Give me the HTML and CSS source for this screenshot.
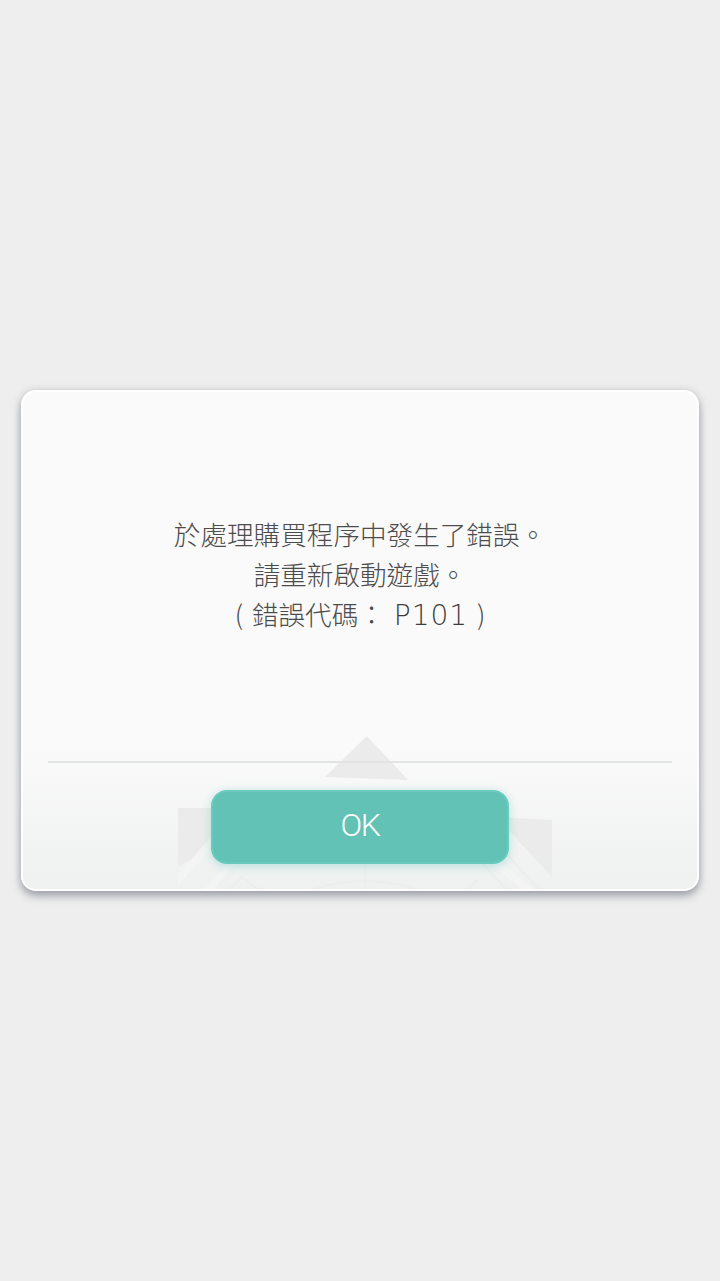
FILE: index.html
```html
<!DOCTYPE html>
<html lang="zh-Hant">
<head>
    <meta charset="UTF-8">
    <meta name="viewport" content="width=device-width, initial-scale=1.0">
    <title>錯誤</title>
    <link rel="stylesheet" href="styles.css">
</head>
<body>
    <div class="dialog">
        <svg class="watermark" width="400" height="170" viewBox="0 0 400 170">
            <polygon class="mark" points="189,17 147,58 230,61"/>
            <polygon class="mark" points="0,89 60,89 60,110 0,148"/>
            <polygon class="mark" points="320,98 374,101 374,158 320,100"/>
            <path class="stripe" d="M-4 166 L34 122 M30 172 L62 134 M300 130 L352 172"/>
            <path class="stripe-thin" d="M52 170 L64 158 L82 172 M187 130 V170 M130 172 Q187 152 244 172 M288 172 L300 160 M330 172 L300 140 M362 172 L326 132"/>
        </svg>
        <div class="message">
            <p>於處理購買程序中發生了錯誤。</p>
            <p>請重新啟動遊戲。</p>
            <p class="error-code">( 錯誤代碼： <span class="code">P101</span> )</p>
        </div>
        <div class="divider"></div>
        <div class="actions">
            <button class="ok-btn">OK</button>
        </div>
    </div>
</body>
</html>
```

FILE: styles.css
```css
body {
    margin: 0;
    height: 1281px;
    display: flex;
    align-items: center;
    justify-content: center;
    background-color: #eeeeee;
    font-family: "Noto Sans CJK TC", "Noto Sans", sans-serif;
    overflow: hidden;
}
.dialog {
    position: relative;
    box-sizing: border-box;
    width: 678px;
    height: 501px;
    display: flex;
    flex-direction: column;
    border: 2px solid #ffffff;
    border-radius: 15px;
    background: linear-gradient(#fafafa 0%, #fafafa 72%, #eff0f0 100%);
    box-shadow: 0 5px 9px rgba(110, 116, 128, 0.6), 0 0 7px rgba(150, 155, 160, 0.3);
}
.watermark {
    position: absolute;
    left: 155px;
    bottom: 0;
    filter: blur(0.6px);
}
.mark {
    fill: #ebebeb;
}
.stripe {
    fill: none;
    stroke: #f4f4f4;
    stroke-width: 7;
}
.stripe-thin {
    fill: none;
    stroke: #ededed;
    stroke-width: 2;
}
.message {
    box-sizing: border-box;
    height: 369px;
    padding-bottom: 3px;
    display: flex;
    flex-direction: column;
    justify-content: center;
    align-items: center;
    color: #4c4c4c;
    font-size: 26.6px;
    font-weight: 300;
    line-height: 40px;
    position: relative;
}
.message p {
    margin: 0;
    text-align: center;
}
.error-code {
    word-spacing: 3px;
}
.code {
    font-family: "DejaVu Sans", sans-serif;
    font-size: 28px;
    font-weight: 200;
    letter-spacing: 1px;
    color: #3c3c3c;
}
.divider {
    height: 2px;
    margin: 0 25px;
    background-color: #e2e3e3;
    position: relative;
}
.actions {
    display: flex;
    justify-content: center;
    padding-top: 27px;
    position: relative;
}
.ok-btn {
    box-sizing: border-box;
    width: 298px;
    height: 74px;
    padding: 0 0 4px;
    background-color: #63c2b6;
    color: #ffffff;
    border: 2px solid #69cabd;
    border-radius: 16px;
    font-family: Roboto, sans-serif;
    font-size: 32px;
    font-weight: 300;
    letter-spacing: -1.5px;
    box-shadow: 0 2px 10px rgba(100, 205, 190, 0.45);
    cursor: pointer;
}
```
